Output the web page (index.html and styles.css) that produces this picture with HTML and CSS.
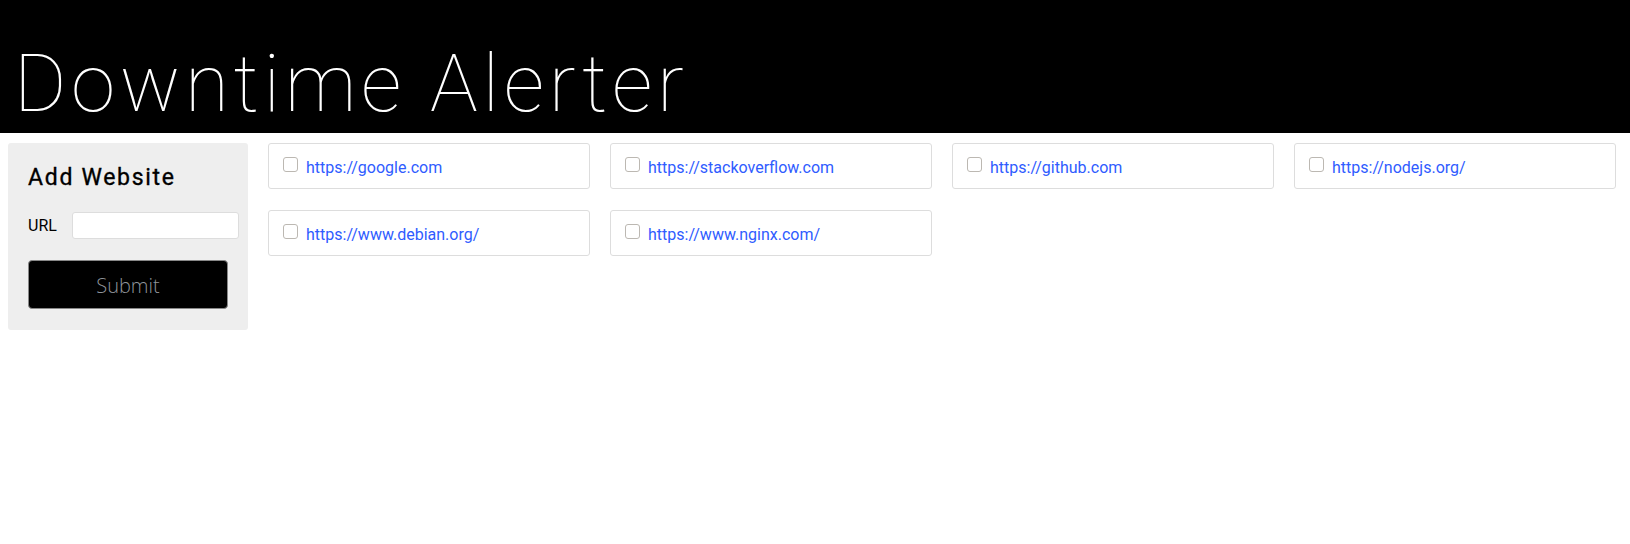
FILE: index.html
```html
<!DOCTYPE html>
<html lang="en">
<head>
<meta charset="utf-8">
<title>Downtime Alerter</title>
<link rel="stylesheet" href="styles.css">
</head>
<body>
<header class="site-header">
  <h1 class="site-title">Downtime Alerter</h1>
</header>
<main class="layout">
  <aside class="add-panel">
    <h2 class="add-title">Add Website</h2>
    <form class="add-form">
      <div class="field-row">
        <label class="field-label" for="url">URL</label>
        <input class="field-input" id="url" type="text">
      </div>
      <button class="submit-btn" type="button">Submit</button>
    </form>
  </aside>
  <section class="site-list">
    <div class="site-card"><input class="site-check" type="checkbox"><a class="site-link" href="#">https://google.com</a></div>
    <div class="site-card"><input class="site-check" type="checkbox"><a class="site-link" href="#">https://stackoverflow.com</a></div>
    <div class="site-card"><input class="site-check" type="checkbox"><a class="site-link" href="#">https://github.com</a></div>
    <div class="site-card"><input class="site-check" type="checkbox"><a class="site-link" href="#">https://nodejs.org/</a></div>
    <div class="site-card"><input class="site-check" type="checkbox"><a class="site-link" href="#">https://www.debian.org/</a></div>
    <div class="site-card"><input class="site-check" type="checkbox"><a class="site-link" href="#">https://www.nginx.com/</a></div>
  </section>
</main>
</body>
</html>
```

FILE: styles.css
```css
* { box-sizing: border-box; }

body {
  margin: 0;
  background: #fff;
  font-family: Roboto, "Liberation Sans", sans-serif;
  color: #000;
}

.site-header {
  background: #000;
  height: 133px;
  padding: 44px 0 0 14px;
}

.site-title {
  margin: 0;
  font-family: Roboto, sans-serif;
  font-weight: 100;
  font-size: 80px;
  line-height: 80px;
  letter-spacing: 4.7px;
  color: #fff;
}

.layout {
  display: flex;
  align-items: flex-start;
  gap: 20px;
  padding: 10px 14px 0 8px;
}

.add-panel {
  flex: 0 0 240px;
  width: 240px;
  background: #eee;
  border-radius: 3px;
  padding: 22px 8px 21px 20px;
}

.add-title {
  margin: 0;
  font-family: Roboto, sans-serif;
  font-weight: 400;
  font-size: 23px;
  line-height: 26px;
  letter-spacing: 1.7px;
  -webkit-text-stroke: 0.35px #000;
}

.add-form {
  margin: 0;
}

.field-row {
  display: flex;
  align-items: center;
  margin-top: 21px;
}

.field-label {
  width: 44px;
  font-size: 16px;
  line-height: 27px;
}

.field-input {
  width: 167px;
  height: 27px;
  margin: 0;
  border: 1px solid #ddd;
  border-radius: 3px;
  background: #fff;
  font-family: Roboto, sans-serif;
  font-size: 14px;
}

.submit-btn {
  display: block;
  margin-top: 21px;
  width: 200px;
  height: 49px;
  background: #000;
  border: 1px solid #888;
  border-radius: 4px;
  color: #8f949a;
  font-family: "Open Sans", sans-serif;
  font-weight: 300;
  font-size: 20px;
  line-height: 50px;
  padding: 0;
  cursor: pointer;
}

.site-list {
  flex: 1;
  display: grid;
  grid-template-columns: repeat(4, 1fr);
  column-gap: 20px;
  row-gap: 21px;
}

.site-card {
  display: flex;
  align-items: flex-start;
  height: 46px;
  border: 1px solid #ddd;
  border-radius: 3px;
  padding: 13px 14px 0 14px;
}

.site-check {
  appearance: none;
  -webkit-appearance: none;
  width: 15px;
  height: 15px;
  margin: 0 8px 0 0;
  border: 1px solid #bcb8b2;
  border-radius: 3px;
  background: #fff;
  flex: 0 0 auto;
}

.site-link {
  margin-top: 1px;
  font-size: 16px;
  line-height: 19px;
  color: #2f5cff;
  text-decoration: none;
}
```
